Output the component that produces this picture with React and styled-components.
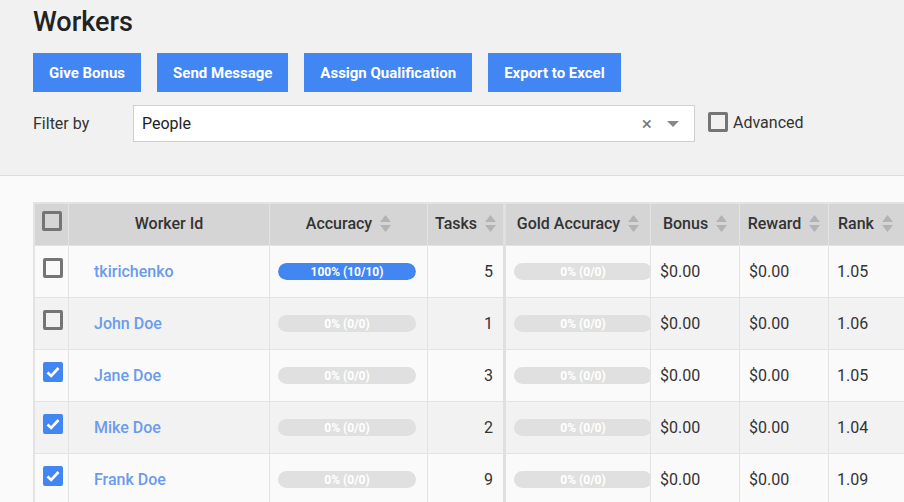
import React from "react";
import styled, { createGlobalStyle } from "styled-components";

const GlobalStyle = createGlobalStyle`
  * { box-sizing: border-box; }
  html, body {
    margin: 0;
    padding: 0;
    overflow: hidden;
    background: #fafafa;
    font-family: Roboto, "Liberation Sans", Arial, sans-serif;
    color: #333;
  }
`;

const TopPanel = styled.header`
  background: #f1f1f1;
  border-bottom: 1px solid #dcdcdc;
  padding: 6px 33px 33px;
  height: 176px;
`;

const Title = styled.h1`
  margin: 0;
  font-size: 27px;
  font-weight: 500;
  line-height: 32px;
  color: #222;
`;

const Toolbar = styled.div`
  display: flex;
  gap: 16px;
  margin-top: 15px;
`;

const ActionButton = styled.button`
  height: 39px;
  padding: 0 16px;
  border: none;
  background: #4286f4;
  color: #fff;
  font-family: inherit;
  font-size: 15px;
  font-weight: 700;
  cursor: pointer;
`;

const FilterRow = styled.div`
  display: flex;
  align-items: center;
  margin-top: 13px;
`;

const FilterLabel = styled.span`
  width: 100px;
  font-size: 16px;
  color: #333;
`;

const SelectBox = styled.div`
  width: 562px;
  height: 37px;
  display: flex;
  align-items: center;
  background: #fff;
  border: 1px solid #cfcfcf;
  padding: 0 15px 0 8px;
  font-size: 16px;
  color: #222;
`;

const SelectValue = styled.span`
  flex: 1;
`;

const ClearMark = styled.span`
  color: #777;
  font-size: 19px;
  line-height: 1;
  margin-right: 15px;
`;

const Caret = styled.span`
  width: 0;
  height: 0;
  border-left: 6px solid transparent;
  border-right: 6px solid transparent;
  border-top: 6px solid #888;
`;

const CheckLabel = styled.label`
  display: flex;
  align-items: center;
  gap: 5px;
  margin-left: 13px;
  margin-top: -3px;
  font-size: 16px;
  color: #333;
`;

const Box = styled.span`
  width: 20px;
  height: 20px;
  border-radius: 2px;
  display: inline-flex;
  align-items: center;
  justify-content: center;
  flex-shrink: 0;
  border: ${(p) => (p.$checked ? "none" : "3px solid #757575")};
  background: ${(p) => (p.$checked ? "#4286f4" : "transparent")};
`;

const Content = styled.main`
  padding: 26px 0 0 33px;
`;

const Table = styled.table`
  border-collapse: separate;
  border-spacing: 0;
  table-layout: fixed;
  width: 980px;
  border-top: 2px solid #e3e3e3;
  border-left: 2px solid #e3e3e3;
`;

const HeadCell = styled.th`
  height: 42px;
  background: #d5d5d5;
  border-right: ${(p) => (p.$thick ? "3px solid #e0e0e0" : "1px solid #e3e3e3")};
  border-bottom: 1px solid #e3e3e3;
  font-size: 16px;
  font-weight: 500;
  color: #333;
  padding: 0 0 3px;
  text-align: center;
  white-space: nowrap;
`;

const HeadInner = styled.span`
  display: inline-flex;
  align-items: center;
  gap: 8px;
`;

const Cell = styled.td`
  height: 52px;
  background: ${(p) => (p.$odd ? "#f2f2f2" : "#fafafa")};
  border-right: ${(p) => (p.$thick ? "3px solid #e0e0e0" : "1px solid #e3e3e3")};
  border-bottom: 1px solid #e3e3e3;
  padding: 0 ${(p) => p.$padRight ?? 8}px 0 ${(p) => p.$padLeft ?? 8}px;
  font-size: 16px;
  color: #333;
  text-align: ${(p) => p.$align || "left"};
  vertical-align: middle;
  white-space: nowrap;
  overflow: hidden;
`;

const CheckCell = styled(Cell)`
  vertical-align: top;
  padding: 12px 0 0 8px;
`;

const WorkerLink = styled.a`
  color: #6b9bec;
  font-weight: 500;
  text-decoration: none;
  padding-left: 17px;
`;

const Bar = styled.div`
  position: relative;
  width: 138px;
  height: 17px;
  border-radius: 9px;
  background: #e0e0e0;
  overflow: hidden;
`;

const BarFill = styled.div`
  height: 100%;
  background: #4286f4;
  border-radius: 9px;
`;

const BarLabel = styled.span`
  position: absolute;
  inset: 0;
  display: flex;
  align-items: center;
  justify-content: center;
  color: #fff;
  font-size: 12px;
  font-weight: 700;
`;

function SortIcon() {
  return (
    <svg width="11" height="17" viewBox="0 0 11 17">
      <path d="M5.5 0 L11 7 L0 7 Z" fill="#b3b3b3" />
      <path d="M0 10 L11 10 L5.5 17 Z" fill="#b3b3b3" />
    </svg>
  );
}

function Check({ checked }) {
  return (
    <Box $checked={checked}>
      {checked && (
        <svg width="14" height="12" viewBox="0 0 14 12">
          <path d="M1.5 6.5 L5.2 10 L12.5 2" stroke="#fff" strokeWidth="2.6" fill="none" />
        </svg>
      )}
    </Box>
  );
}

function Progress({ done, total }) {
  const pct = total ? Math.round((done / total) * 100) : 0;
  return (
    <Bar>
      <BarFill style={{ width: `${pct}%` }} />
      <BarLabel>{`${pct}% (${done}/${total})`}</BarLabel>
    </Bar>
  );
}

const workers = [
  { name: "tkirichenko", acc: [10, 10], tasks: 5, rank: "1.05", checked: false },
  { name: "John Doe", acc: [0, 0], tasks: 1, rank: "1.06", checked: false },
  { name: "Jane Doe", acc: [0, 0], tasks: 3, rank: "1.05", checked: true },
  { name: "Mike Doe", acc: [0, 0], tasks: 2, rank: "1.04", checked: true },
  { name: "Frank Doe", acc: [0, 0], tasks: 9, rank: "1.09", checked: true },
];

const buttons = ["Give Bonus", "Send Message", "Assign Qualification", "Export to Excel"];

export default function App() {
  return (
    <>
      <GlobalStyle />
      <TopPanel>
        <Title>Workers</Title>
        <Toolbar>
          {buttons.map((b) => (
            <ActionButton key={b}>{b}</ActionButton>
          ))}
        </Toolbar>
        <FilterRow>
          <FilterLabel>Filter by</FilterLabel>
          <SelectBox>
            <SelectValue>People</SelectValue>
            <ClearMark>×</ClearMark>
            <Caret />
          </SelectBox>
          <CheckLabel>
            <Check checked={false} />
            Advanced
          </CheckLabel>
        </FilterRow>
      </TopPanel>
      <Content>
        <Table>
          <colgroup>
            <col style={{ width: 34 }} />
            <col style={{ width: 201 }} />
            <col style={{ width: 158 }} />
            <col style={{ width: 78 }} />
            <col style={{ width: 145 }} />
            <col style={{ width: 89 }} />
            <col style={{ width: 89 }} />
            <col style={{ width: 184 }} />
          </colgroup>
          <thead>
            <tr>
              <HeadCell>
                <Check checked={false} />
              </HeadCell>
              <HeadCell>Worker Id</HeadCell>
              <HeadCell>
                <HeadInner>Accuracy<SortIcon /></HeadInner>
              </HeadCell>
              <HeadCell $thick>
                <HeadInner>Tasks<SortIcon /></HeadInner>
              </HeadCell>
              <HeadCell>
                <HeadInner>Gold Accuracy<SortIcon /></HeadInner>
              </HeadCell>
              <HeadCell>
                <HeadInner>Bonus<SortIcon /></HeadInner>
              </HeadCell>
              <HeadCell>
                <HeadInner>Reward<SortIcon /></HeadInner>
              </HeadCell>
              <HeadCell style={{ textAlign: "left", paddingLeft: 9 }}>
                <HeadInner>Rank<SortIcon /></HeadInner>
              </HeadCell>
            </tr>
          </thead>
          <tbody>
            {workers.map((w, i) => (
              <tr key={w.name}>
                <CheckCell $odd={i % 2 === 1}>
                  <Check checked={w.checked} />
                </CheckCell>
                <Cell $odd={i % 2 === 1}>
                  <WorkerLink href="#">{w.name}</WorkerLink>
                </Cell>
                <Cell $odd={i % 2 === 1}>
                  <Progress done={w.acc[0]} total={w.acc[1]} />
                </Cell>
                <Cell $odd={i % 2 === 1} $thick $align="right" $padRight={10}>
                  {w.tasks}
                </Cell>
                <Cell $odd={i % 2 === 1} $padRight={0}>
                  <Progress done={0} total={0} />
                </Cell>
                <Cell $odd={i % 2 === 1} $padLeft={9}>$0.00</Cell>
                <Cell $odd={i % 2 === 1} $padLeft={9}>$0.00</Cell>
                <Cell $odd={i % 2 === 1} $padLeft={8}>{w.rank}</Cell>
              </tr>
            ))}
          </tbody>
        </Table>
      </Content>
    </>
  );
}
